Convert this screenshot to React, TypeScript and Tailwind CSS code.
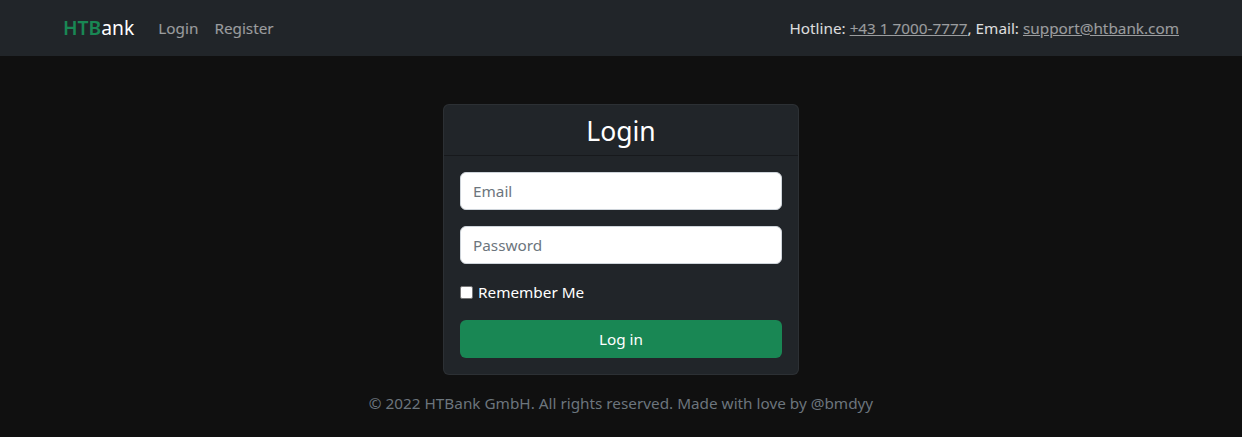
export default function App() {
  return (
    <div className="min-h-[437px] bg-[#101010] text-white text-[15.3px]" style={{ fontFamily: '"Noto Sans", "Open Sans", sans-serif' }}>
      <nav className="h-14 bg-[#212529] px-[63px] flex items-center justify-between">
        <div className="flex items-center">
          <a className="text-[19.3px] mr-[24px] leading-none">
            <span className="text-[#198754] font-semibold">HTB</span>
            <span>ank</span>
          </a>
          <a className="text-white/55 mr-[16px]">Login</a>
          <a className="text-white/55">Register</a>
        </div>
        <div className="text-white/85">
          Hotline: <a className="underline text-white/55">+43 1 7000-7777</a>, Email:{' '}
          <a className="underline text-white/55">support@htbank.com</a>
        </div>
      </nav>

      <main className="flex flex-col items-center pt-12">
        <div className="w-[356px] bg-[#212529] rounded-md border border-white/5">
          <div className="h-[51px] flex items-center justify-center pt-[3px] border-b border-black/30">
            <h3 className="text-[26.5px] leading-tight">Login</h3>
          </div>
          <div className="p-4 flex flex-col">
            <input
              placeholder="Email"
              className="h-[38px] bg-white text-[#212529] rounded-md border border-[#ced4da] px-3 placeholder:text-[#6c757d] outline-none"
            />
            <input
              placeholder="Password"
              type="password"
              className="mt-4 h-[38px] bg-white text-[#212529] rounded-md border border-[#ced4da] px-3 placeholder:text-[#6c757d] outline-none"
            />
            <label className="mt-4 flex items-center h-[24px]">
              <input
                type="checkbox"
                className="appearance-none w-[13px] h-[13px] mr-[5px] bg-white border border-[#767676] rounded-[2px]"
              />
              Remember Me
            </label>
            <button className="mt-4 h-[38px] bg-[#198754] rounded-md">Log in</button>
          </div>
        </div>
        <p className="mt-[17px] text-[#6c757d]">© 2022 HTBank GmbH. All rights reserved. Made with love by @bmdyy</p>
      </main>
    </div>
  );
}
